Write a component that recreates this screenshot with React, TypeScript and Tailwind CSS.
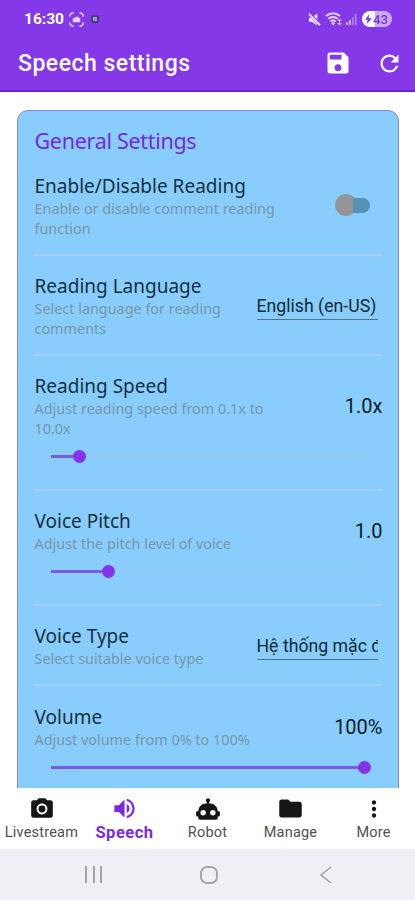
import type { ReactNode } from "react";
import {
  MdCameraAlt,
  MdFolder,
  MdMoreVert,
  MdRefresh,
  MdSave,
  MdVolumeUp,
} from "react-icons/md";

interface SettingRowProps {
  title: string;
  hint: string;
  hintWidth?: string;
  className: string;
  children?: ReactNode;
  slider?: number;
}

function Slider({ value }: { value: number }) {
  return (
    <div className="relative mt-[10px] ml-4 mr-[18px] h-[14px] flex items-center">
      <div className="w-full h-[2px] bg-[#93c9ec]" />
      <div
        className="absolute left-0 h-[3px] bg-[#7a5be2]"
        style={{ width: `${value}%` }}
      />
      <div
        className="absolute size-[13px] -ml-[6px] rounded-full bg-[#8433ea]"
        style={{ left: `${value}%` }}
      />
    </div>
  );
}

function SettingRow({ title, hint, hintWidth, className, children, slider }: SettingRowProps) {
  return (
    <div className={className}>
      <div className="flex items-start justify-between">
        <div>
          <h3 className="text-[19px] leading-[24px] text-[#16303f] whitespace-nowrap">{title}</h3>
          <p className={`mt-px text-[14.4px] leading-[20px] text-[#7796a9] ${hintWidth ?? "whitespace-nowrap"}`}>
            {hint}
          </p>
        </div>
        {children}
      </div>
      {slider !== undefined && <Slider value={slider} />}
    </div>
  );
}

function Select({ value, className }: { value: string; className: string }) {
  return (
    <div
      className={`${className} mr-[4px] w-[121px] h-[28px] shrink-0 overflow-hidden whitespace-nowrap border-b-[1.5px] border-[#4f7389] font-[Roboto,sans-serif] text-[17.7px] leading-[28px] text-[#122a38]`}
    >
      {value}
    </div>
  );
}

function Value({ children, className }: { children: ReactNode; className: string }) {
  return (
    <span className={`${className} -mr-px font-[Roboto,sans-serif] text-[20px] leading-[28px] text-[#0b1a24]`}>
      {children}
    </span>
  );
}

function RobotIcon() {
  return (
    <svg viewBox="0 0 24 24" className="size-[26px]" fill="currentColor">
      <path d="M12 2a2 2 0 0 1 2 2c0 .74-.4 1.39-1 1.73V7h1a7 7 0 0 1 7 7h1a1 1 0 0 1 1 1v3a1 1 0 0 1-1 1h-1v1a2 2 0 0 1-2 2H5a2 2 0 0 1-2-2v-1H2a1 1 0 0 1-1-1v-3a1 1 0 0 1 1-1h1a7 7 0 0 1 7-7h1V5.73A2 2 0 0 1 12 2M7.5 13a2.5 2.5 0 1 0 0 5 2.5 2.5 0 0 0 0-5m9 0a2.5 2.5 0 1 0 0 5 2.5 2.5 0 0 0 0-5Z" />
    </svg>
  );
}

function StatusBar() {
  return (
    <div className="flex h-[38px] items-center pl-[24px] pr-[23px] text-white">
      <span className="pt-px text-[15.5px] font-bold leading-none">16:30</span>
      <svg viewBox="0 0 16 16" className="ml-[5px] size-[15px]" fill="none" stroke="#e4d3fb" strokeWidth="1.5">
        <path d="M1 5V3l2-2h2M11 1h2l2 2v2M15 11v2l-2 2h-2M5 15H3l-2-2v-2" />
        <path d="M4 6.500h2L7 5h3l1 1.500h1V11H4z" fill="#e4d3fb" stroke="none" />
      </svg>
      <span className="ml-[7px] size-[8px] rounded-[2px] border-2 border-[#4b3a7c] bg-[#8ca3c8]" />
      <div className="ml-auto flex items-center">
        <svg viewBox="0 0 14 14" className="size-[13px]" fill="#f0e6fd">
          <path d="M1 5h3l6-4.500v13L4 9.500H1z" />
          <path d="M2 1l11 12" stroke="#8438e8" strokeWidth="3.500" />
          <path d="M1 1l12 12" stroke="#f0e6fd" strokeWidth="2" />
        </svg>
        <svg viewBox="0 0 18 14" className="ml-[4px] w-[18px] h-[14px]" fill="none" stroke="#e4d3fb" strokeWidth="2">
          <path d="M1 4q7-5.500 14 0M3.300 6.800q4.700-3.500 9.400 0M5.500 9.500q2.500-1.800 5 0" />
          <path d="M6 10.500h4.500L8.200 13.500z" fill="#e4d3fb" stroke="none" />
          <path d="M14.500 7v6M12.500 9L14.500 7l2 2M12.500 11l2 2 2-2" strokeWidth="1" />
        </svg>
        <svg viewBox="0 0 12 12" className="ml-[3px] size-[11px]" fill="#dac3fa">
          <path d="M0 9h2v3H0zM3.200 6.500h2V12h-2z" />
          <path d="M6.400 3.500h2V12h-2zM9.600 0h2v12h-2z" fillOpacity=".5" />
        </svg>
        <div className="ml-[5px] flex h-[16px] w-[30px] items-center rounded-full bg-linear-to-r from-white from-43% to-[#cba8f8] to-43% pl-[3px]">
          <svg viewBox="0 0 8 12" className="w-[7px] h-[10px]" fill="#7931dd">
            <path d="M5 0L0 7h3l-1 5 6-7H4z" />
          </svg>
          <span className="ml-px text-[13px] font-medium leading-none text-[#7739cd]">43</span>
        </div>
      </div>
    </div>
  );
}

const tabs = [
  { label: "Livestream", icon: <MdCameraAlt className="size-[26px]" /> },
  { label: "Speech", icon: <MdVolumeUp className="size-[27px]" />, active: true },
  { label: "Robot", icon: <RobotIcon /> },
  { label: "Manage", icon: <MdFolder className="size-[27px]" /> },
  { label: "More", icon: <MdMoreVert className="size-[26px]" /> },
];

export default function App() {
  return (
    <div className="flex h-[900px] w-[415px] flex-col overflow-hidden bg-white font-['Noto_Sans',sans-serif]">
      <header className="h-[92px] shrink-0 border-b-2 border-[#6d1bd5] bg-[#8438e8] font-[Roboto,sans-serif]">
        <StatusBar />
        <div className="flex h-[50px] items-center pl-[18px] pr-[12px] text-white">
          <h1 className="pt-[2px] text-[23px] font-medium tracking-[0.5px]">Speech settings</h1>
          <MdSave className="ml-auto size-[28px]" />
          <MdRefresh className="ml-[24px] size-[27px]" />
        </div>
      </header>

      <main className="min-h-0 flex-1 overflow-hidden px-[17px] pt-[18px]">
        <section className="h-[760px] w-[382px] rounded-[11px] border-[1.5px] border-[#987be8] bg-[#89cdfc] px-[16.500px] pt-[16px]">
          <h2 className="text-[21.500px] leading-[28px] tracking-[-0.3px] text-[#7529e2]">General Settings</h2>

          <div className="mt-[8px] divide-y-2 divide-[#a3d0ee]">
            <SettingRow className="h-[93px] pt-[11px]" title="Enable/Disable Reading" hint="Enable or disable comment reading function" hintWidth="w-[260px]">
              <div className="mt-[20px] mr-[12px] flex h-[22px] items-center">
                <div className="size-[22px] rounded-full bg-[#959496]" />
                <div className="-ml-[4px] h-[15px] w-[17px] rounded-r-full bg-[#5593b5]" />
              </div>
            </SettingRow>
            <SettingRow className="h-[100px] pt-[18px]" title="Reading Language" hint="Select language for reading comments" hintWidth="w-[200px]">
              <Select className="mt-[18px]" value="English (en-US)" />
            </SettingRow>
            <SettingRow className="h-[135px] pt-[18px]" title="Reading Speed" hint="Adjust reading speed from 0.1x to 10.0x" hintWidth="w-[250px]" slider={9.1}>
              <Value className="mt-[18px]">1.0x</Value>
            </SettingRow>
            <SettingRow className="h-[115px] pt-[18px]" title="Voice Pitch" hint="Adjust the pitch level of voice" slider={18.4}>
              <Value className="mt-[8px]">1.0</Value>
            </SettingRow>
            <SettingRow className="h-[80px] pt-[18px]" title="Voice Type" hint="Select suitable voice type">
              <Select className="mt-[8px]" value="Hệ thống mặc định" />
            </SettingRow>
            <SettingRow className="h-[120px] pt-[19px]" title="Volume" hint="Adjust volume from 0% to 100%" slider={100}>
              <Value className="mt-[8px]">100%</Value>
            </SettingRow>
          </div>
        </section>
      </main>

      <nav className="flex h-[61px] shrink-0 bg-white pt-[7px] font-[Roboto,sans-serif]">
        {tabs.map((tab) => (
          <div
            key={tab.label}
            className={`flex w-[83px] flex-col items-center ${tab.active ? "text-[#7a2be2]" : "text-[#161616]"}`}
          >
            <div className="flex h-[27px] items-center">{tab.icon}</div>
            <span
              className={
                tab.active
                  ? "text-[16.500px] font-bold leading-[21px] tracking-[0.5px]"
                  : "text-[14.500px] leading-[22px] tracking-[0.2px] text-[#505050]"
              }
            >
              {tab.label}
            </span>
          </div>
        ))}
      </nav>

      {/* Android navigation */}
      <footer className="flex h-[51px] shrink-0 items-center bg-[#f0eff4] pl-[85px] text-[#a5a5a8]">
        <div className="flex h-[17px] w-[17px] justify-between">
          <span className="w-[2px] bg-current" />
          <span className="w-[2px] bg-current" />
          <span className="w-[2px] bg-current" />
        </div>
        <div className="ml-[98px] size-[18px] rounded-[7px] border-2 border-current" />
        <svg viewBox="0 0 12 18" className="ml-[102px] w-[12px] h-[18px]" fill="none" stroke="currentColor" strokeWidth="1.6">
          <path d="M11 1L1 9l10 8" />
        </svg>
      </footer>
    </div>
  );
}
